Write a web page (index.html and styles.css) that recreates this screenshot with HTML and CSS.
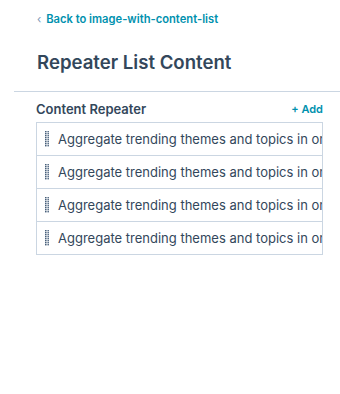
FILE: index.html
```html
<!DOCTYPE html>
<html>
<head>
  <title>Repeater List Content</title>
  <link rel="stylesheet" href="styles.css">
</head>
<body>
  <svg class="defs" width="0" height="0">
    <defs>
      <pattern id="dots" width="2.5" height="2" patternUnits="userSpaceOnUse">
        <rect x="0" y="0" width="1.5" height="1.4" fill="#425b76"></rect>
      </pattern>
    </defs>
  </svg>
  <div class="panel-head">
    <a class="back-link" href="#"><span class="chevron">&lsaquo;</span> Back to image-with-content-list</a>
    <h1>Repeater List Content</h1>
  </div>
  <hr class="divider">
  <section class="repeater">
    <div class="repeater-head">
      <span class="repeater-title">Content Repeater</span>
      <a class="add-link" href="#">+ Add</a>
    </div>
    <ul class="repeater-list">
      <li><svg class="handle" width="4" height="16"><rect width="4" height="16" fill="url(#dots)"></rect></svg><span class="item-text">Aggregate trending themes and topics in one place</span></li>
      <li><svg class="handle" width="4" height="16"><rect width="4" height="16" fill="url(#dots)"></rect></svg><span class="item-text">Aggregate trending themes and topics in one place</span></li>
      <li><svg class="handle" width="4" height="16"><rect width="4" height="16" fill="url(#dots)"></rect></svg><span class="item-text">Aggregate trending themes and topics in one place</span></li>
      <li><svg class="handle" width="4" height="16"><rect width="4" height="16" fill="url(#dots)"></rect></svg><span class="item-text">Aggregate trending themes and topics in one place</span></li>
    </ul>
  </section>
</body>
</html>
```

FILE: styles.css
```css
body {
  font-family: 'Inter', sans-serif;
  margin: 0;
  padding: 0;
  background: #fff;
  color: #33475b;
}
.defs {
  position: absolute;
}
.panel-head {
  padding: 11px 0 0 37px;
}
.back-link {
  display: block;
  color: #0091ae;
  font-size: 11.2px;
  font-weight: 600;
  text-decoration: none;
  line-height: 16px;
}
.chevron {
  color: #7c98b6;
  font-weight: normal;
  margin-right: 2px;
}
h1 {
  margin: 22px 0 0;
  font-size: 18.6px;
  line-height: 26px;
  font-weight: 600;
  color: #33475b;
}
.divider {
  margin: 16px 0 0 14px;
  border: none;
  border-top: 1px solid #cbd6e2;
}
.repeater {
  padding: 9px 17px 0 36px;
}
.repeater-head {
  display: flex;
  justify-content: space-between;
  align-items: center;
  height: 16px;
  margin-bottom: 5px;
}
.repeater-title {
  font-size: 13px;
  font-weight: 600;
}
.add-link {
  color: #0091ae;
  font-size: 11px;
  font-weight: 600;
  text-decoration: none;
}
.repeater-list {
  list-style: none;
  margin: 0;
  padding: 0;
  border: 1px solid #cbd6e2;
}
.repeater-list li {
  display: flex;
  align-items: center;
  height: 32px;
  padding-left: 8px;
  border-top: 1px solid #cbd6e2;
  overflow: hidden;
  white-space: nowrap;
}
.repeater-list li:first-child {
  border-top: none;
}
.handle {
  flex: none;
  margin-right: 9px;
}
.item-text {
  font-size: 13px;
  color: #33475b;
}
```
